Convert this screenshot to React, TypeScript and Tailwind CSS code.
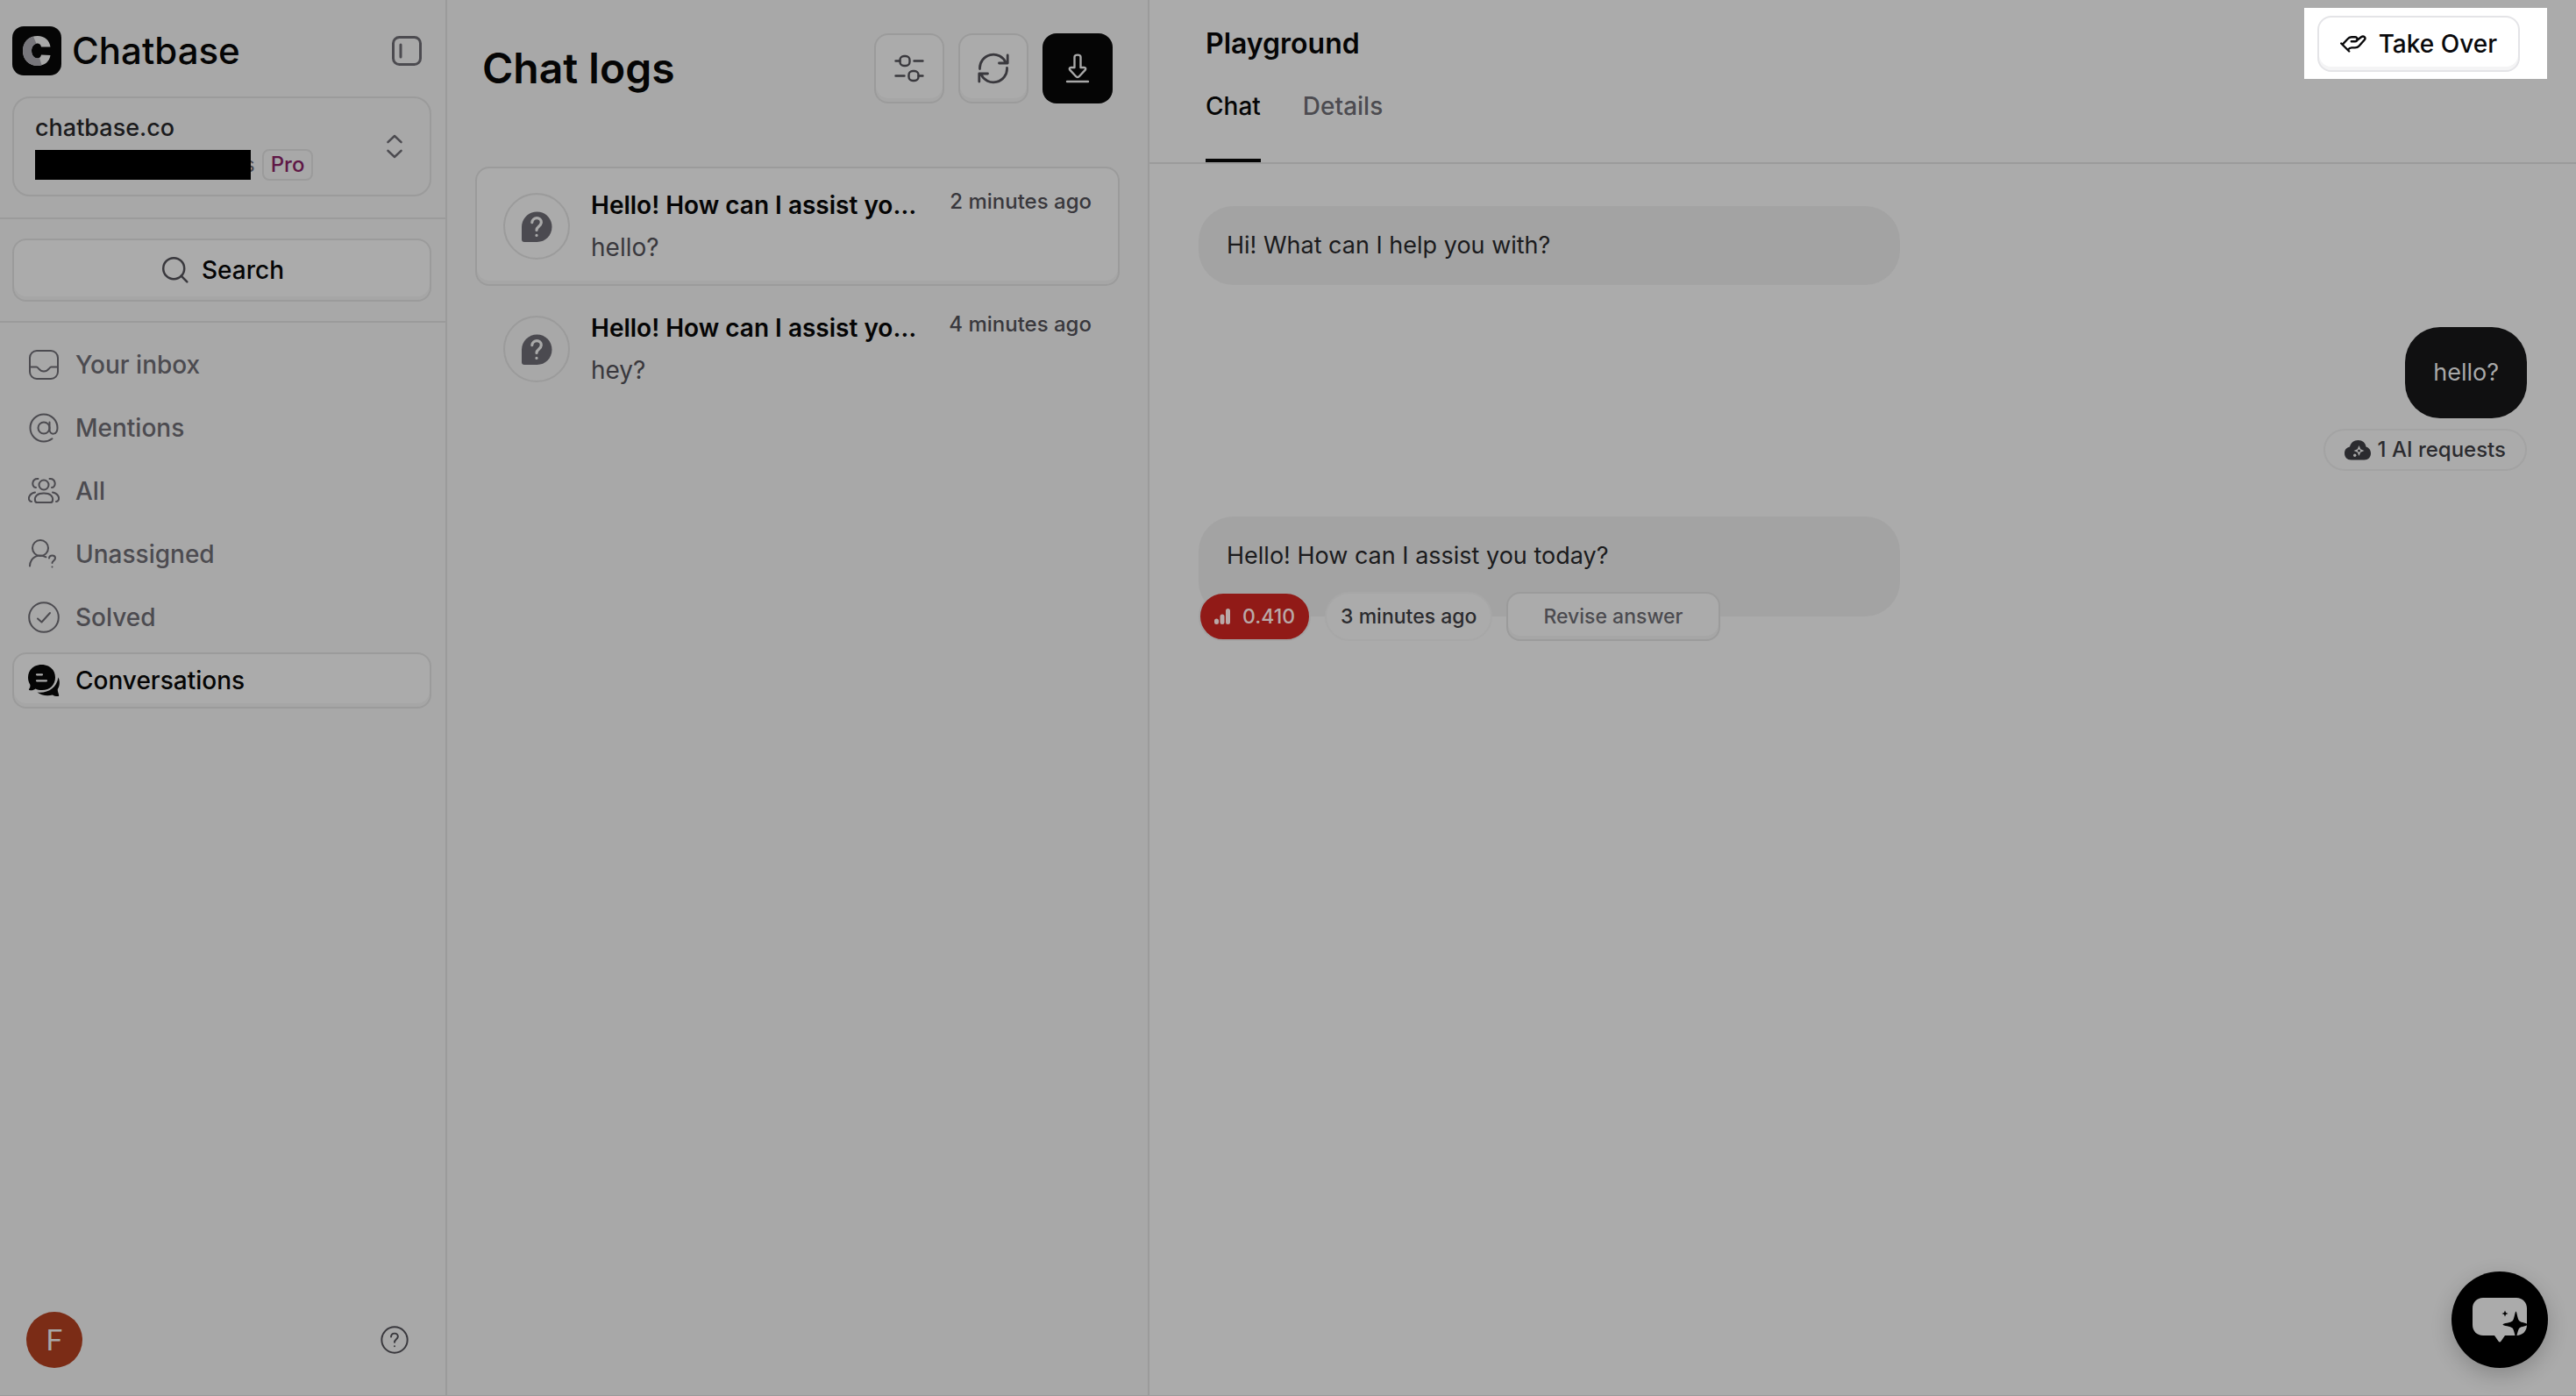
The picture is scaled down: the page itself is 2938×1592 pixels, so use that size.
import type { ReactNode } from "react";

type IconProps = { className?: string };

function Logo() {
  return (
    <svg viewBox="0 0 56 56" className="size-14" aria-hidden="true">
      <rect width="56" height="56" rx="13" fill="#050505" />
      <path
        d="M43.500 23.500C42.600 16 37 11 29 11C19 11 12 18 12 28C12 38 19 45 29 45C37 45 42.600 40 43.500 33L33 32.500C32.500 35 31 36.500 28.500 36.500C25 36.500 22 33 22 28C22 23 25 19.500 28.500 19.500C31 19.500 32.500 21 33 23.500Z"
        fill="#a8a8a8"
      />
      <path
        d="M24 11.500C17 13 12 19 12 28C12 38 19 45 29 45C30.500 45 32 44.800 33.500 44.300L31 35.800C27 38 22 34 22 28C22 24 24 20.800 27.500 19.700Z"
        fill="#77767b"
      />
    </svg>
  );
}

function Stroke({ children, className, width = 2 }: IconProps & { children: ReactNode; width?: number }) {
  return (
    <svg
      viewBox="0 0 36 36"
      className={className}
      fill="none"
      stroke="currentColor"
      strokeWidth={width}
      strokeLinecap="round"
      strokeLinejoin="round"
      aria-hidden="true"
    >
      {children}
    </svg>
  );
}

const icon = "size-9 shrink-0";

const InboxIcon = () => (
  <Stroke className={icon}>
    <rect x="2" y="2" width="32" height="32" rx="8" />
    <path d="M2 20.500H9.500C12 20.500 12.500 25.500 18 25.500S24 20.500 26.500 20.500H34" />
  </Stroke>
);

const MentionIcon = () => (
  <Stroke className={icon}>
    <circle cx="18" cy="18" r="6.500" />
    <path d="M24.500 11.500V20C24.500 26.500 33.500 26.500 33.500 18C33.500 9.400 26.600 2.500 18 2.500S2.500 9.400 2.500 18S9.400 33.500 18 33.500C21.500 33.500 24.700 32.500 27.500 30.300" />
  </Stroke>
);

const TeamIcon = () => (
  <Stroke className={icon}>
    <circle cx="18" cy="11" r="5.500" />
    <path d="M8 29C7 23.500 11 20.500 18 20.500S29 23.500 28 29C27.800 30.300 27 31 25.500 31H10.500C9 31 8.200 30.300 8 29Z" />
    <path d="M11.500 4C4 3.500 3.500 13.500 9 14M24.500 4C32 3.500 32.500 13.500 27 14M8 19.500C3 20 -0.500 25 1.500 28.500C2 29.500 2.700 30 4 30M28 19.500C33 20 36.500 25 34.500 28.500C34 29.500 33.300 30 32 30" />
  </Stroke>
);

const UnassignedIcon = () => (
  <Stroke className={icon}>
    <circle cx="14" cy="11" r="9" />
    <path d="M2 31.500C2.500 20.500 13 17 20.500 21.300M24 22.500C24.300 18.500 31 18.500 31 22.500C31 25.300 27.500 25.500 27.500 28M27.500 32.500V32.600" />
  </Stroke>
);

const SolvedIcon = () => (
  <Stroke className={icon}>
    <circle cx="18" cy="18" r="16.800" />
    <path d="M11 19.500L15.500 23.500L25 13" />
  </Stroke>
);

const ConversationsIcon = () => (
  <svg viewBox="0 0 36 36" className={icon} aria-hidden="true">
    <path
      d="M15.500 0C24.500 0 31 6 31 14.500C31 23 25 29 16 29C13 29 10.500 28.500 8.500 27.500C6.500 29 4 29.700 1.500 29C0.800 28.800 0.800 28 1.300 27.500C2.500 26 2.700 24.300 2.200 22.600C0.800 20 0 17.500 0 14.500C0 6 6.500 0 15.500 0Z"
      fill="currentColor"
    />
    <path
      d="M34.500 14.500C36.500 18.500 36.300 24 33.800 28C33.500 30.500 35 32.500 35.200 35C35.200 36 34.500 36.200 33.800 36C31.500 36 29.500 35.500 28 34.500C22 36.200 14.500 35 10.500 31.500C22 33 32.500 27 34.500 14.500Z"
      fill="currentColor"
    />
    <path d="M10 11.300H16M10 18.300H21" stroke="#ababab" strokeWidth="2.200" strokeLinecap="round" />
  </svg>
);

const PanelIcon = () => (
  <Stroke className={icon} width={3}>
    <rect x="2.500" y="2.500" width="31" height="31" rx="7" />
    <path d="M11 11V25" />
  </Stroke>
);

const SearchIcon = () => (
  <Stroke className="size-8" width={2.800}>
    <circle cx="16" cy="16" r="13.500" />
    <path d="M25.500 25.500L33 33" />
  </Stroke>
);

const SelectorIcon = () => (
  <Stroke className="size-8" width={2.800}>
    <path d="M9.500 12.500L18 4.500L26.500 12.500M9.500 23.500L18 31.500L26.500 23.500" />
  </Stroke>
);

const HelpIcon = () => (
  <Stroke className="size-8" width={2.200}>
    <circle cx="18" cy="18" r="16.500" />
    <path d="M13.500 14C13.800 8 22.800 8.500 22.300 14C22 17 18 17.300 18 21M18 26V26.200" />
  </Stroke>
);

const FilterIcon = () => (
  <Stroke className={icon} width={2.400}>
    <rect x="7.500" y="4" width="11" height="11" rx="4.500" />
    <rect x="17.500" y="21" width="11" height="11" rx="4.500" />
    <path d="M2.500 9.500H7.500M23.500 9.500H33.500M2.500 26.500H12.500M28.500 26.500H33.500" />
  </Stroke>
);

const RefreshIcon = () => (
  <Stroke className={icon} width={2.800}>
    <path d="M2.500 18.500A15.500 15.500 0 0 1 32.200 11.500M34.200 3V12H24.500M33.500 17.500A15.500 15.500 0 0 1 3.800 24.500M1.800 33V24H11.500" />
  </Stroke>
);

const DownloadIcon = () => (
  <Stroke className={icon} width={2.400}>
    <path d="M14.500 5C14.500 1.800 21.500 1.800 21.500 5V17H25.500C27.300 17 27.600 18.600 26.800 19.600L20 27C18.800 28.400 17.200 28.400 16 27L9.200 19.600C8.400 18.600 8.700 17 10.500 17H14.500ZM6 33H30" />
  </Stroke>
);

const QuestionBubble = () => (
  <svg viewBox="0 0 36 36" className={icon} aria-hidden="true">
    <path
      d="M18.500 1.500C28 1.500 35.500 9 35.500 18.800S28 36 18.500 36H4C2 36 1 35 1 33V18.800C1 9 9 1.500 18.500 1.500Z"
      fill="#4b4a50"
    />
    <path
      d="M12.800 13.700C13.300 7 23.500 7 23.300 13.700C23 18.500 18 18 18 22.500M18 28.300V28.500"
      fill="none"
      stroke="#a9a9a9"
      strokeWidth="3.200"
      strokeLinecap="round"
    />
  </svg>
);

const HandIcon = () => (
  <svg
    viewBox="0 0 30 20"
    className="h-5 w-[30px]"
    fill="none"
    stroke="currentColor"
    strokeWidth="2.400"
    strokeLinecap="round"
    strokeLinejoin="round"
    aria-hidden="true"
  >
    <path d="M1.200 9.500L10.200 18.500M2.800 10.600L8.500 4.500C9.700 3 11 2.300 13 2.300H17C20.500 2.300 20.200 7.200 17 7.200L12.800 7.300M18.500 6.500L24 2.200C26.800 0.200 29.800 3 27.700 5.500L21.500 12.500C20.200 14 19 14.400 17 14.400H13C11.300 14.400 10.500 14.700 9 16.500" />
  </svg>
);

const CloudIcon = () => (
  <svg viewBox="0 0 30 24" className="h-6 w-[30px]" aria-hidden="true">
    <path
      d="M6 8.500C7 4 10.500 1 15.500 1S24 4 24.500 8.500C28 9.500 30 12.500 30 16C30 20.500 27 23.500 22.500 23.500H7.500C3 23.500 0 20.500 0 16C0 12 2.200 9.300 6 8.500Z"
      fill="#2b2b2f"
    />
    <path
      d="M16.500 7L18.300 11.200L22.500 13L18.300 14.800L16.500 19L14.700 14.800L10.500 13L14.700 11.200Z"
      fill="#a9a9a9"
    />
    <circle cx="16.500" cy="13" r="1.500" fill="#2b2b2f" />
    <circle cx="11.700" cy="18.300" r="1.700" fill="#a9a9a9" />
  </svg>
);

const BarsIcon = () => (
  <svg viewBox="0 0 18 18" className="size-[18px]" aria-hidden="true">
    <path
      d="M2.500 15.500V14M9 15.500V9M15.500 15.500V2.500"
      stroke="currentColor"
      strokeWidth="5"
      strokeLinecap="round"
    />
  </svg>
);

const LauncherIcon = () => (
  <svg viewBox="0 0 64 52" className="h-[52px] w-16" aria-hidden="true">
    <path
      d="M13 1H51C58 1 63 6 63 13V32C63 39 58 44 51 44H38L33.500 50.500C32.600 51.900 31.400 51.900 30.500 50.500L26 44H13C6 44 1 39 1 32V13C1 6 6 1 13 1Z"
      fill="#ababab"
    />
    <path
      d="M50.500 16.500C51.500 16.500 52.300 26 54.500 27.500C56 29.200 64 30 64 31.500S56 33.800 54.500 35.500C52.500 37.500 51.500 46 50.500 46S48.500 37.500 46.500 35.500C45 33.800 35.500 32.800 35.500 31.500S45 29.200 46.500 27.500C48.500 26 49.500 16.500 50.500 16.500ZM38 15.500L39 18L41.500 19L39 20L38 22.500L37 20L34.500 19L37 18Z"
      fill="#000"
    />
  </svg>
);

const raised = "border-2 border-[#9b9b9b] bg-[#ababab] shadow-[inset_0_-4px_0_#a6a6a6]";

const folders = [
  { label: "Your inbox", Icon: InboxIcon },
  { label: "Mentions", Icon: MentionIcon },
  { label: "All", Icon: TeamIcon },
  { label: "Unassigned", Icon: UnassignedIcon },
  { label: "Solved", Icon: SolvedIcon },
  { label: "Conversations", Icon: ConversationsIcon, active: true },
];

const logs = [
  { title: "Hello! How can I assist yo…", preview: "hello?", time: "2 minutes ago", active: true },
  { title: "Hello! How can I assist yo…", preview: "hey?", time: "4 minutes ago" },
];

function Sidebar() {
  return (
    <aside className="flex w-[510px] shrink-0 flex-col border-r-2 border-[#9b9b9b]">
      <div className="flex items-center gap-3 pt-[30px] pr-[26px] pl-3.5">
        <Logo />
        <span className="flex-1 text-[42px] leading-[56px] font-medium text-[#050505]">Chatbase</span>
        <button type="button" aria-label="Toggle sidebar" className="text-[#4c4b50]">
          <PanelIcon />
        </button>
      </div>

      <div className="border-b-2 border-[#9b9b9b] pt-6 pr-4 pb-6 pl-3.5">
        <button
          type="button"
          className="flex h-[114px] w-full items-center justify-between rounded-[20px] border-2 border-[#9b9b9b] pr-6 pl-6 text-left"
        >
          <span className="flex flex-col gap-1.5">
            <span className="text-[27px] leading-9 font-medium text-[#1b1b1d]">chatbase.co</span>
            <span className="flex items-center text-2xl text-[#4c4b50]">
              <span className="relative h-[34px] w-[246px] bg-black" />
              <span className="-ml-2">s</span>
              <span className="ml-2 rounded-lg border-2 border-[#9b9b9b] px-2 leading-8 font-medium text-[#5f1746]">
                Pro
              </span>
            </span>
          </span>
          <span className="text-[#4c4b50]">
            <SelectorIcon />
          </span>
        </button>
      </div>

      <div className="border-b-2 border-[#9b9b9b] pt-[22px] pr-4 pb-[22px] pl-3.5">
        <button
          type="button"
          className={`flex h-[72px] w-full items-center justify-center gap-3.5 rounded-2xl pl-0.5 text-[28px] font-medium text-[#050505] ${raised}`}
        >
          <span className="text-[#39383d]">
            <SearchIcon />
          </span>
          Search
        </button>
      </div>

      <nav className="flex flex-col gap-2 pt-4 pr-4 pl-3.5">
        {folders.map(({ label, Icon, active }) => (
          <a
            key={label}
            href="#"
            className={`flex h-16 items-center gap-[18px] rounded-2xl px-4 text-[28px] font-medium ${
              active ? `text-[#050505] ${raised}` : "border-2 border-transparent text-[#4c4b50]"
            }`}
          >
            <Icon />
            {label}
          </a>
        ))}
      </nav>

      <div className="mt-auto flex items-center justify-between pr-[42px] pb-[31px] pl-[30px]">
        <button
          type="button"
          aria-label="Account"
          className="flex size-16 items-center justify-center rounded-full bg-[#7b2c16] font-['Roboto',sans-serif] text-[34px] text-[#a8a8a8]"
        >
          F
        </button>
        <button type="button" aria-label="Help" className="text-[#39383d]">
          <HelpIcon />
        </button>
      </div>
    </aside>
  );
}

function ChatLogs() {
  return (
    <section className="flex w-[801px] shrink-0 flex-col border-r-2 border-[#9b9b9b] px-8">
      <header className="flex items-center gap-4 pt-[38px] pr-2 pl-2">
        <h1 className="flex-1 text-5xl font-semibold text-[#050505]">Chat logs</h1>
        <button
          type="button"
          aria-label="Filter"
          className={`flex size-20 items-center justify-center rounded-2xl text-[#39383d] ${raised}`}
        >
          <FilterIcon />
        </button>
        <button
          type="button"
          aria-label="Refresh"
          className={`flex size-20 items-center justify-center rounded-2xl text-[#39383d] ${raised}`}
        >
          <RefreshIcon />
        </button>
        <button
          type="button"
          aria-label="Export"
          className="flex size-20 items-center justify-center rounded-2xl bg-[#050505] text-[#a8a8a8]"
        >
          <DownloadIcon />
        </button>
      </header>

      <ul className="mt-[72px] flex flex-col gap-1">
        {logs.map((log) => (
          <li key={log.time}>
            <button
              type="button"
              className={`flex h-[136px] w-full items-start rounded-2xl px-[30px] text-left ${
                log.active ? raised : "border-2 border-transparent"
              }`}
            >
              <span className="mt-7 flex size-[76px] shrink-0 items-center justify-center rounded-full border-2 border-[#9b9b9b]">
                <QuestionBubble />
              </span>
              <span className="mt-[18px] ml-6 flex flex-1 flex-col text-[28px] leading-[48px]">
                <span className="font-semibold whitespace-nowrap text-[#050505]">{log.title}</span>
                <span className="text-[#39383d]">{log.preview}</span>
              </span>
              <span className="mt-[18px] shrink-0 text-2xl leading-10 font-medium text-[#39383d]">{log.time}</span>
            </button>
          </li>
        ))}
      </ul>
    </section>
  );
}

function Playground() {
  return (
    <main className="relative flex min-w-0 flex-1 flex-col bg-[#ababab]">
      <header className="border-b-2 border-[#9b9b9b] pl-16">
        <div className="flex items-start justify-between">
          <h2 className="pt-[30px] text-[32px] leading-10 font-semibold text-[#050505]">Playground</h2>
          <div className="mt-[9px] mr-[33px] bg-white pt-[9px] pr-[31px] pb-2 pl-[15px]">
            <button
              type="button"
              className="flex h-16 items-center gap-3.5 rounded-2xl border-2 border-[#e4e4e7] bg-white px-6 text-[28px] font-medium text-[#09090b] shadow-[inset_0_-4px_0_#f4f4f5]"
            >
              <HandIcon />
              Take Over
            </button>
          </div>
        </div>
        <div role="tablist" className="flex h-[95px] gap-12 text-[28px] leading-[62px] font-medium">
          <button
            type="button"
            role="tab"
            aria-selected="true"
            className="flex items-start border-b-4 border-[#050505] text-[#050505]"
          >
            Chat
          </button>
          <button type="button" role="tab" aria-selected="false" className="flex items-start text-[#4c4b50]">
            Details
          </button>
        </div>
      </header>

      <div className="flex flex-col items-start pt-12 pr-14 pl-14 text-[27px] text-[#1b1b1d]">
        <p className="w-[800px] rounded-[40px] bg-[#a3a3a3] px-8 py-6 leading-[42px]">Hi! What can I help you with?</p>

        <div className="mt-12 flex flex-col items-end self-end">
          <p className="rounded-[40px] bg-[#101011] px-8 py-8 leading-10 text-[#a8a8a8]">hello?</p>
          <span className="mt-3 flex h-12 items-center gap-2 rounded-full border-2 border-[#a3a3a3] px-[22px] text-2xl font-medium text-[#2b2b2f]">
            <CloudIcon />
            1 AI requests
          </span>
        </div>

        <p className="mt-[52px] w-[800px] rounded-[40px] bg-[#a3a3a3] px-8 pt-6 pb-12 leading-[42px]">
          Hello! How can I assist you today?
        </p>
        <div className="relative -mt-7 flex items-center text-[23px] font-medium">
          <button
            type="button"
            className="flex h-14 items-center gap-3.5 rounded-full border-2 border-[#a3a3a3] bg-[#911a17] px-4 text-[#b9a9a8]"
          >
            <BarsIcon />
            0.410
          </button>
          <span className="ml-4 flex h-14 items-center rounded-full border-2 border-[#a7a7a7] bg-[#ababab] px-4 text-[#2b2b2f]">
            3 minutes ago
          </span>
          <button
            type="button"
            className={`ml-4 flex h-14 items-center rounded-2xl px-10 text-[#4c4b50] ${raised}`}
          >
            Revise answer
          </button>
        </div>
      </div>

      <button
        type="button"
        aria-label="Open chat"
        className="absolute right-8 bottom-[31px] flex size-[110px] items-center justify-center rounded-full bg-black shadow-[0_8px_24px_rgba(0,0,0,0.2)]"
      >
        <LauncherIcon />
      </button>
    </main>
  );
}

export default function App() {
  return (
    <div className="flex min-h-screen w-full border-b border-[#9b9b9b] bg-[#a8a8a8] font-['Inter',sans-serif]">
      <Sidebar />
      <ChatLogs />
      <Playground />
    </div>
  );
}
